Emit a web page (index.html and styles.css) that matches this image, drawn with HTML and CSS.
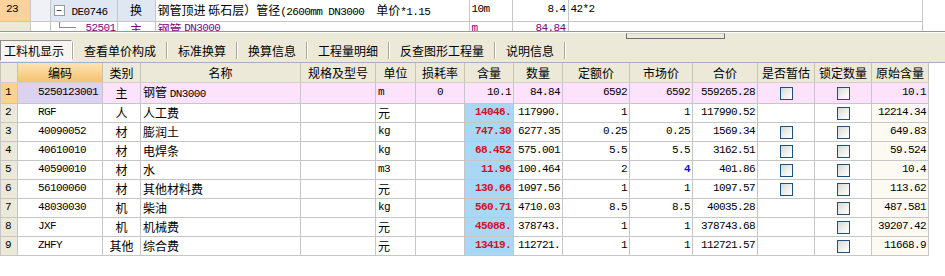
FILE: index.html
```html
<!DOCTYPE html>
<html lang="zh-CN">
<head>
  <meta charset="UTF-8">
  <title>工料机显示</title>
  <link rel="stylesheet" href="styles.css">
</head>
<body>
  <div class="top">
    <table class="tree">
      <colgroup>
        <col style="width:30px"><col style="width:20px"><col style="width:67px"><col style="width:38px">
        <col style="width:314px"><col style="width:43px"><col style="width:56px"><col style="width:354px">
      </colgroup>
      <tr class="cur">
        <td class="no m">23</td>
        <td class="lead"></td>
        <td class="blue"><span class="minus">−</span><span class="m">DE0746</span></td>
        <td class="blue c">换</td>
        <td>钢管顶进 砾石层）管径<span class="m">(2600mm DN3000&nbsp;&nbsp;</span>单价<span class="m">*1.15</span></td>
        <td class="m">10m</td>
        <td class="m r">8.4</td>
        <td class="m">42*2</td>
      </tr>
      <tr class="sub">
        <td class="no2"></td>
        <td></td>
        <td><span class="branch"></span><span class="m">52501</span></td>
        <td class="c">主</td>
        <td>钢管 <span class="m">DN3000</span></td>
        <td class="m">m</td>
        <td class="m r">84.84</td>
        <td></td>
      </tr>
    </table>
  </div>

  <div class="bar">
    <div class="hscroll"></div>
    <div class="tabs">
      <span class="tab on">工料机显示</span><i class="sep"></i>
      <span class="tab">查看单价构成</span><i class="sep"></i>
      <span class="tab">标准换算</span><i class="sep"></i>
      <span class="tab">换算信息</span><i class="sep"></i>
      <span class="tab">工程量明细</span><i class="sep"></i>
      <span class="tab">反查图形工程量</span><i class="sep"></i>
      <span class="tab">说明信息</span><i class="sep"></i>
    </div>
  </div>

  <table class="grid">
    <colgroup>
      <col style="width:17px"><col style="width:85px"><col style="width:38px"><col style="width:160px">
      <col style="width:75px"><col style="width:40px"><col style="width:49px"><col style="width:49px">
      <col style="width:49px"><col style="width:67px"><col style="width:63px"><col style="width:65px">
      <col style="width:57px"><col style="width:57px"><col style="width:57px">
    </colgroup>
    <tr class="head">
      <th></th><th class="sel">编码</th><th>类别</th><th>名称</th><th>规格及型号</th><th>单位</th><th>损耗率</th>
      <th>含量</th><th>数量</th><th>定额价</th><th>市场价</th><th>合价</th><th>是否暂估</th><th>锁定数量</th><th>原始含量</th>
    </tr>
    <tr class="pick">
      <td class="no on m">1</td><td class="code m lav">5250123001</td><td class="c">主</td><td>钢管 <span class="m">DN3000</span></td><td></td>
      <td class="m">m</td><td class="m c">0</td><td class="m r">10.1</td><td class="m r">84.84</td><td class="m r">6592</td>
      <td class="m r">6592</td><td class="m r">559265.28</td><td class="c"><span class="cb"></span></td><td class="c"><span class="cb"></span></td><td class="m r">10.1</td>
    </tr>
    <tr>
      <td class="no m">2</td><td class="code m">RGF</td><td class="c">人</td><td>人工费</td><td></td>
      <td>元</td><td></td><td class="m r qty">14046.</td><td class="m r">117990.</td><td class="m r">1</td>
      <td class="m r">1</td><td class="m r">117990.52</td><td></td><td class="c"><span class="cb"></span></td><td class="m r orig">12214.34</td>
    </tr>
    <tr>
      <td class="no m">3</td><td class="code m">40090052</td><td class="c">材</td><td>膨润土</td><td></td>
      <td class="m">kg</td><td></td><td class="m r qty">747.30</td><td class="m r">6277.35</td><td class="m r">0.25</td>
      <td class="m r">0.25</td><td class="m r">1569.34</td><td class="c"><span class="cb"></span></td><td class="c"><span class="cb"></span></td><td class="m r orig">649.83</td>
    </tr>
    <tr>
      <td class="no m">4</td><td class="code m">40610010</td><td class="c">材</td><td>电焊条</td><td></td>
      <td class="m">kg</td><td></td><td class="m r qty">68.452</td><td class="m r">575.001</td><td class="m r">5.5</td>
      <td class="m r">5.5</td><td class="m r">3162.51</td><td class="c"><span class="cb"></span></td><td class="c"><span class="cb"></span></td><td class="m r orig">59.524</td>
    </tr>
    <tr>
      <td class="no m">5</td><td class="code m">40590010</td><td class="c">材</td><td>水</td><td></td>
      <td class="m">m3</td><td></td><td class="m r qty">11.96</td><td class="m r">100.464</td><td class="m r">2</td>
      <td class="m r chg">4</td><td class="m r">401.86</td><td class="c"><span class="cb"></span></td><td class="c"><span class="cb"></span></td><td class="m r orig">10.4</td>
    </tr>
    <tr>
      <td class="no m">6</td><td class="code m">56100060</td><td class="c">材</td><td>其他材料费</td><td></td>
      <td>元</td><td></td><td class="m r qty">130.66</td><td class="m r">1097.56</td><td class="m r">1</td>
      <td class="m r">1</td><td class="m r">1097.57</td><td class="c"><span class="cb"></span></td><td class="c"><span class="cb"></span></td><td class="m r orig">113.62</td>
    </tr>
    <tr>
      <td class="no m">7</td><td class="code m">48030030</td><td class="c">机</td><td>柴油</td><td></td>
      <td class="m">kg</td><td></td><td class="m r qty">560.71</td><td class="m r">4710.03</td><td class="m r">8.5</td>
      <td class="m r">8.5</td><td class="m r">40035.28</td><td></td><td class="c"><span class="cb"></span></td><td class="m r orig">487.581</td>
    </tr>
    <tr>
      <td class="no m">8</td><td class="code m">JXF</td><td class="c">机</td><td>机械费</td><td></td>
      <td>元</td><td></td><td class="m r qty">45088.</td><td class="m r">378743.</td><td class="m r">1</td>
      <td class="m r">1</td><td class="m r">378743.68</td><td></td><td class="c"><span class="cb"></span></td><td class="m r orig">39207.42</td>
    </tr>
    <tr>
      <td class="no m">9</td><td class="code m">ZHFY</td><td class="c">其他</td><td>综合费</td><td></td>
      <td>元</td><td></td><td class="m r qty">13419.</td><td class="m r">112721.</td><td class="m r">1</td>
      <td class="m r">1</td><td class="m r">112721.57</td><td></td><td class="c"><span class="cb"></span></td><td class="m r orig">11668.9</td>
    </tr>
  </table>
</body>
</html>
```

FILE: styles.css
```css
body {
  margin: 0;
  width: 945px;
  height: 276px;
  overflow: hidden;
  background-color: #ffffff;
  color: #000;
  font-family: "Noto Sans CJK SC", sans-serif;
  font-size: 12px;
}
table {
  border-collapse: collapse;
  table-layout: fixed;
}
td, th {
  padding: 0 2px;
  border: 1px solid #c6c6c6;
  white-space: nowrap;
  overflow: hidden;
  line-height: 17px;
  font-weight: normal;
  text-align: left;
}
.m {
  font-family: "Liberation Mono", monospace;
  font-size: 11px;
  letter-spacing: -0.6px;
}
.c { text-align: center; }
.r { text-align: right; }

/* upper tree grid */
.top {
  height: 31px;
  overflow: hidden;
  border-bottom: 1px solid #8d99a6;
}
.tree {
  width: 922px;
  margin-top: -1px;
}
.tree td {
  border-left: 1px solid #c6c6c6;
  vertical-align: top;
  padding-top: 1px;
}
.tree tr { height: 20px; }
.tree td:first-child { border-left: none; }
.tree .no {
  background-color: #fad39c;
  padding-left: 6px;
}
.tree .no2 { background-color: #ece9d8; }
.tree .lead { background-color: #eef1f6; }
.tree .blue { background-color: #dfe7f2; }
.tree .sub td {
  color: #800080;
  line-height: 11px;
  padding-top: 1px;
}
.tree .sub span.m { vertical-align: top; }
.minus {
  display: inline-block;
  width: 9px;
  height: 9px;
  line-height: 8px;
  margin: 0 7px 0 1px;
  border: 1px solid #9a9a9a;
  background-color: #fff;
  color: #000;
  text-align: center;
  font-size: 10px;
  vertical-align: 1px;
}
.branch {
  display: inline-block;
  width: 16px;
  height: 6px;
  margin: -2px 10px 0 6px;
  border-left: 1px solid #8a8a8a;
  border-bottom: 1px solid #8a8a8a;
  vertical-align: top;
}

/* tab bar */
.bar {
  height: 29px;
  background-color: #ece9d8;
  border-bottom: 1px solid #a7b1bc;
}
.hscroll {
  width: 97px;
  height: 4px;
  margin: 1px 0 0 626px;
  border: 1px solid #6f6f6f;
  border-top-color: #d0d0d0;
  background-color: #ece9d8;
}
.tabs {
  display: flex;
  align-items: center;
  height: 21px;
  margin-top: 1px;
}
.tab {
  padding: 0 10px;
  line-height: 19px;
}
.tab.on {
  padding: 0 7px 0 3px;
  background-color: #f5f4ef;
  border-top: 1px solid #8c8c8c;
  border-left: 1px solid #8c8c8c;
  border-right: 1px solid #ffffff;
  border-bottom: 1px solid #ffffff;
}
.sep {
  width: 1px;
  height: 17px;
  background-color: #aca899;
  border-right: 1px solid #ffffff;
}

/* lower material grid */
.grid { width: 928px; }
.grid tr { height: 19px; }
.head { height: 21px; }
.head th {
  background-color: #ece9d8;
  text-align: center;
  border-color: #d4d0c4 #c8c4b4;
  border-top: none;
}
.head th.sel {
  background: linear-gradient(#fde3b4, #f6c26f);
}
.grid .no {
  background-color: #ece9d8;
  padding-left: 4px;
}
.grid .no.on { background-color: #fbd38d; }
.code { padding-left: 20px; }
.pick td { background-color: #fce3fb; }
.pick td.no.on { background-color: #fbd38d; }
.pick td.lav { background-color: #dbd1f0; }
.qty {
  background-color: #a8d8f6;
  color: #d3101f;
  font-weight: bold;
}
.chg {
  color: #1010d0;
  font-weight: bold;
}
.orig { background-color: #fdf9f3; }
.cb {
  display: inline-block;
  width: 11px;
  height: 11px;
  border: 1px solid #1c5180;
  background: linear-gradient(135deg, #d8d8d2, #f6f6f3 70%, #ffffff);
  vertical-align: -2px;
}
```
